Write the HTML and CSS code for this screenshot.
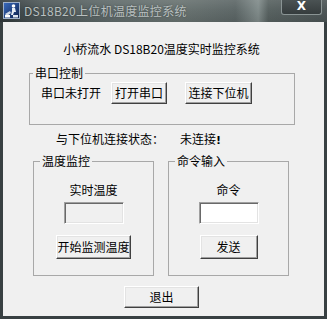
FILE: index.html
```html
<!DOCTYPE html>
<html>
<head>
<meta charset="utf-8">
<link rel="stylesheet" href="styles.css">
</head>
<body>
<div class="window">
  <div class="titlebar">
    <svg class="app-icon" width="17" height="17" viewBox="0 0 17 17">
      <defs>
        <linearGradient id="ig" x1="0" y1="0" x2="1" y2="1">
          <stop offset="0" stop-color="#3a6cc0"/>
          <stop offset="1" stop-color="#0c1f4a"/>
        </linearGradient>
      </defs>
      <rect x="0.5" y="0.5" width="16" height="16" fill="url(#ig)" stroke="#9fb0c8"/>
      <circle cx="10.5" cy="4" r="1.8" fill="#fff"/>
      <path d="M9 6 L12 6 L13 10 L11 10 L10 13 L8 13 L9 9 Z" fill="#e8eef6"/>
      <path d="M2 12 L7 9 L8 11 L4 14 Z" fill="#cfd8e6"/>
      <rect x="2" y="13" width="5" height="2.5" fill="#fff"/>
      <rect x="10" y="13" width="5" height="2.5" fill="#dfe6f0"/>
    </svg>
    <span class="title">DS18B20上位机温度监控系统</span>
    <div class="close-btn">X</div>
  </div>
  <div class="frame">
    <div class="client">
      <div class="heading">小桥流水 DS18B20温度实时监控系统</div>
      <fieldset class="group group-serial">
        <legend>串口控制</legend>
        <div class="serial-row">
          <span class="serial-label">串口未打开</span>
          <button class="btn btn-open">打开串口</button>
          <button class="btn btn-connect">连接下位机</button>
        </div>
      </fieldset>
      <div class="status">
        <span class="status-label">与下位机连接状态：</span>
        <span class="status-value">未连接<b class="bang">!</b></span>
      </div>
      <div class="groups">
        <fieldset class="group group-small">
          <legend>温度监控</legend>
          <div class="caption">实时温度</div>
          <div class="textbox disabled"></div>
          <button class="btn btn-monitor">开始监测温度</button>
        </fieldset>
        <fieldset class="group group-small">
          <legend>命令输入</legend>
          <div class="caption">命令</div>
          <div class="textbox"></div>
          <button class="btn btn-send">发送</button>
        </fieldset>
      </div>
      <div class="exit-row">
        <button class="btn btn-exit">退出</button>
      </div>
    </div>
  </div>
</div>
</body>
</html>
```
FILE: styles.css
```css
html, body {
  margin: 0;
  padding: 0;
  background: #ffffff;
}
body {
  font-family: "Noto Sans CJK SC", "DejaVu Sans", sans-serif;
  font-size: 12px;
  color: #000;
}
.window {
  width: 327px;
  height: 319px;
  display: flex;
  flex-direction: column;
  background: #384042;
}
.titlebar {
  height: 22px;
  flex: none;
  display: flex;
  align-items: flex-start;
  background:
    linear-gradient(to bottom, rgba(255,255,255,0.10) 0%, rgba(255,255,255,0.02) 45%, rgba(0,0,0,0.08) 100%),
    linear-gradient(to right, #2f3739 0%, #4b5556 12%, #5f6a6a 35%, #67716f 55%, #5b6565 72%, #7f8a89 79%, #56605f 82%, #4a5354 100%);
}
.app-icon {
  margin: 2px 0 0 3px;
  flex: none;
}
.title {
  margin: 3px 0 0 4px;
  color: #b9c0c0;
  font-size: 12px;
  line-height: 16px;
  letter-spacing: 0.3px;
  text-shadow: 0 0 2px rgba(0,0,0,0.4);
  white-space: nowrap;
}
.close-btn {
  margin-left: auto;
  margin-right: 5px;
  width: 39px;
  height: 14px;
  border: 1px solid #8a9494;
  border-top: none;
  border-radius: 0 0 3px 3px;
  background: linear-gradient(to bottom, #4a5253, #353c3d);
  color: #ffffff;
  font-family: "DejaVu Sans", sans-serif;
  font-weight: bold;
  font-size: 12px;
  line-height: 13px;
  text-align: center;
}
.frame {
  flex: 1;
  padding: 0 3px 3px 3px;
  display: flex;
}
.client {
  flex: 1;
  background: #f0f0f0;
  display: flex;
  flex-direction: column;
}
.heading {
  margin-top: 19px;
  height: 16px;
  line-height: 16px;
  text-align: center;
  padding-right: 4px;
  white-space: nowrap;
}
.group {
  margin: 0;
  padding: 0;
  border: 1px solid #a8a8a8;
  box-sizing: border-box;
  min-width: 0;
}
.group legend {
  padding: 0 2px;
  line-height: 14px;
  height: 14px;
}
.group-serial {
  margin: 9px 29px 0 26px;
  height: 59px;
}
.group-serial legend {
  margin-left: 3px;
}
.serial-row {
  margin-top: 2px;
  padding-left: 11px;
  display: flex;
  align-items: center;
}
.serial-label {
  width: 60px;
  line-height: 14px;
  white-space: nowrap;
}
.btn {
  font-family: "Noto Sans CJK SC", "DejaVu Sans", sans-serif;
  font-size: 12px;
  color: #000;
  background: #f0f0f0;
  border: 1px solid;
  border-color: #ffffff #404040 #404040 #ffffff;
  box-shadow: inset -1px -1px 0 #a0a0a0, inset 1px 1px 0 #e3e3e3;
  padding: 0;
  margin: 0;
  box-sizing: border-box;
  line-height: 14px;
  white-space: nowrap;
}
.btn-open {
  margin-left: 10px;
  width: 56px;
  height: 22px;
}
.btn-connect {
  margin-left: 18px;
  width: 67px;
  height: 22px;
}
.status {
  margin-top: 7px;
  padding-left: 53px;
  line-height: 14px;
  height: 14px;
  display: flex;
  white-space: nowrap;
}
.status-label {
  width: 108px;
}
.status-value {
  margin-left: 16px;
}
.bang {
  font-weight: bold;
  font-family: "DejaVu Sans", sans-serif;
  font-size: 11px;
}
.groups {
  margin-top: 8px;
  padding-left: 30px;
  display: flex;
  gap: 14px;
}
.group-small {
  width: 121px;
  height: 122px;
  display: flex;
  flex-direction: column;
  align-items: center;
}
.group-small legend {
  margin-left: 6px;
}
.caption {
  margin-top: 15px;
  line-height: 14px;
  height: 14px;
  text-align: center;
}
.textbox {
  margin-top: 5px;
  width: 60px;
  height: 22px;
  box-sizing: border-box;
  background: #ffffff;
  border: 1px solid;
  border-color: #a0a0a0 #ffffff #ffffff #a0a0a0;
  box-shadow: inset 1px 1px 0 #696969, inset -1px -1px 0 #e3e3e3;
}
.textbox.disabled {
  background: #f0f0f0;
}
.btn-monitor {
  margin-top: 11px;
  width: 75px;
  height: 24px;
}
.btn-send {
  margin-top: 11px;
  width: 58px;
  height: 24px;
}
.exit-row {
  margin-top: 10px;
  display: flex;
}
.btn-exit {
  margin-left: 121px;
  width: 75px;
  height: 22px;
}
```
